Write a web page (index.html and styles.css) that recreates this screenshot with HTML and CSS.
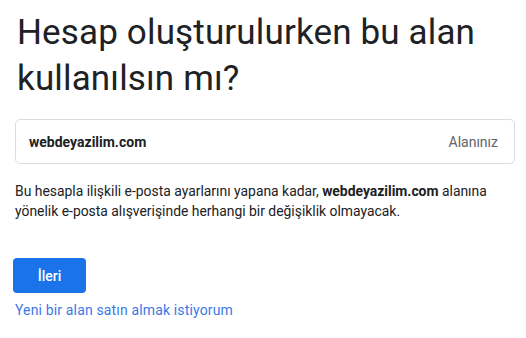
FILE: index.html
```html
<!DOCTYPE html>
<html lang="tr">
<head>
<meta charset="utf-8">
<link rel="stylesheet" href="styles.css">
</head>
<body>
<main class="page">
  <h1 class="title">Hesap oluşturulurken bu alan kullanılsın mı?</h1>
  <div class="field">
    <span class="domain">webdeyazilim.com</span>
    <span class="label">Alanınız</span>
  </div>
  <p class="note">Bu hesapla ilişkili e-posta ayarlarını yapana kadar, <b>webdeyazilim.com</b> alanına yönelik e-posta alışverişinde herhangi bir değişiklik olmayacak.</p>
  <div class="actions">
    <button class="btn">İleri</button>
    <a class="link" href="#">Yeni bir alan satın almak istiyorum</a>
  </div>
</main>
</body>
</html>
```
FILE: styles.css
```css
html, body {
  margin: 0;
  padding: 0;
  background: #fff;
}
body {
  font-family: Roboto, "Liberation Sans", sans-serif;
  color: #202124;
}
.page {
  padding: 10px 11px 0 15px;
  display: flex;
  flex-direction: column;
}
.title {
  margin: 0 0 0 2px;
  font-family: Roboto, "Open Sans", sans-serif;
  font-weight: 400;
  font-size: 35px;
  line-height: 46px;
  letter-spacing: 0.15px;
  color: #202124;
}
.field {
  margin-top: 17px;
  height: 45px;
  box-sizing: border-box;
  border: 1px solid #dadce0;
  border-radius: 5px;
  display: flex;
  align-items: center;
  justify-content: space-between;
  padding: 0 16px 0 13px;
  font-size: 14px;
}
.domain {
  font-weight: 700;
  color: #202124;
}
.label {
  color: #5f6368;
}
.note {
  margin: 17px 0 0 0;
  font-size: 13.9px;
  line-height: 20px;
  color: #202124;
}
.note b {
  font-weight: 700;
}
.actions {
  margin-top: 37px;
  display: flex;
  flex-direction: column;
  align-items: flex-start;
}
.btn {
  margin-left: -2px;
  width: 73px;
  height: 35px;
  border: none;
  border-radius: 4px;
  background: #1a73e8;
  color: #fff;
  font-family: Roboto, sans-serif;
  font-size: 14px;
  font-weight: 500;
}
.link {
  margin-top: 7px;
  font-size: 14px;
  line-height: 20px;
  letter-spacing: 0.15px;
  color: #3b78e7;
  text-decoration: none;
}
```
